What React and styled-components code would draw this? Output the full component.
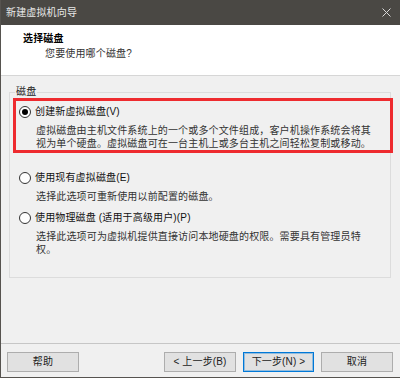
import React from "react";
import styled, { createGlobalStyle } from "styled-components";

const Global = createGlobalStyle`
  html, body { margin: 0; padding: 0; background: #f0f0f0; }
  * { box-sizing: border-box; }
  body {
    font-family: "Liberation Sans", "Noto Sans CJK SC", sans-serif;
    font-size: 10px;
    letter-spacing: 0.15px;
  }
`;

const Window = styled.div`
  width: 400px;
  height: 378px;
  display: flex;
  flex-direction: column;
  background: #f0f0f0;
  border-left: 1px solid #56534f;
  border-bottom: 1px solid #56534f;
  overflow: hidden;
`;

const TitleBar = styled.div`
  height: 25px;
  flex: none;
  background: #4a4844;
  color: #e8e8e8;
  display: flex;
  align-items: center;
  justify-content: space-between;
  padding: 0 9px 0 5px;
  line-height: 13px;
`;

const Header = styled.div`
  height: 51px;
  flex: none;
  background: #ffffff;
  border-bottom: 1px solid #d6d6d6;
  padding: 7px 0 0 22px;
`;

const HeaderTitle = styled.div`
  font-weight: 700;
  line-height: 13px;
  color: #000;
`;

const HeaderSub = styled.div`
  margin: 2px 0 0 22px;
  line-height: 13px;
  color: #333;
`;

const Content = styled.div`
  flex: 1;
  padding: 16px 9px 0 8px;
`;

const Group = styled.div`
  position: relative;
  height: 186px;
  border: 1px solid #dcdcdc;
  padding: 12px 0 0 9px;
`;

const Legend = styled.span`
  position: absolute;
  top: -8px;
  left: 5px;
  padding: 0 1px;
  background: #f0f0f0;
  line-height: 13px;
  color: #222;
`;

const Highlight = styled.div`
  position: absolute;
  left: 3px;
  top: 5px;
  width: 380px;
  height: 55px;
  border: 3px solid #ee2b2f;
  pointer-events: none;
`;

const Option = styled.div`
  margin-bottom: ${(p) => p.$after}px;
`;

const RadioRow = styled.label`
  display: flex;
  align-items: center;
  height: 14px;
  line-height: 14px;
  gap: 4px;
  color: #111;
`;

const Radio = styled.span`
  width: 12px;
  height: 12px;
  border-radius: 50%;
  border: 1px solid #333;
  background: #fff;
  display: flex;
  align-items: center;
  justify-content: center;
  flex: none;
  &::after {
    content: "";
    width: 6px;
    height: 6px;
    border-radius: 50%;
    background: ${(p) => (p.$checked ? "#000" : "transparent")};
  }
`;

const Desc = styled.div`
  margin: 5px 0 0 17px;
  width: 340px;
  line-height: 13px;
  color: #333;
`;

const Footer = styled.div`
  height: 34px;
  flex: none;
  border-top: 1px solid #c6c6c6;
  display: flex;
  align-items: flex-start;
  gap: 7px;
  padding: 8px 7px 0 6px;
`;

const Button = styled.div`
  width: ${(p) => p.$w || 72}px;
  height: 20px;
  background: #e1e1e1;
  border: 1px solid ${(p) => (p.$primary ? "#0078d7" : "#adadad")};
  box-shadow: ${(p) => (p.$primary ? "inset 0 0 0 1px rgba(0,120,215,0.35)" : "none")};
  display: flex;
  align-items: center;
  justify-content: center;
  color: #222;
  line-height: 18px;
  margin-left: ${(p) => (p.$push ? "auto" : "0")};
`;

const CloseIcon = () => (
  <svg width="9" height="9" viewBox="0 0 9 9">
    <path d="M0.5 0.5 L8.5 8.5 M8.5 0.5 L0.5 8.5" stroke="#d8d8d8" strokeWidth="1" fill="none" />
  </svg>
);

export default function App() {
  return (
    <>
      <Global />
      <Window>
        <TitleBar>
          <span>新建虚拟机向导</span>
          <CloseIcon />
        </TitleBar>
        <Header>
          <HeaderTitle>选择磁盘</HeaderTitle>
          <HeaderSub>您要使用哪个磁盘?</HeaderSub>
        </Header>
        <Content>
          <Group>
            <Legend>磁盘</Legend>
            <Option $after={21}>
              <RadioRow>
                <Radio $checked />
                创建新虚拟磁盘(V)
              </RadioRow>
              <Desc>
                虚拟磁盘由主机文件系统上的一个或多个文件组成，客户机操作系统会将其视为单个硬盘。虚拟磁盘可在一台主机上或多台主机之间轻松复制或移动。
              </Desc>
            </Option>
            <Option $after={8}>
              <RadioRow>
                <Radio />
                使用现有虚拟磁盘(E)
              </RadioRow>
              <Desc>选择此选项可重新使用以前配置的磁盘。</Desc>
            </Option>
            <Option $after={0}>
              <RadioRow>
                <Radio />
                使用物理磁盘 (适用于高级用户)(P)
              </RadioRow>
              <Desc>
                选择此选项可为虚拟机提供直接访问本地硬盘的权限。需要具有管理员特权。
              </Desc>
            </Option>
            <Highlight />
          </Group>
        </Content>
        <Footer>
          <Button>帮助</Button>
          <Button $push>&lt; 上一步(B)</Button>
          <Button $primary $w={71}>下一步(N) &gt;</Button>
          <Button>取消</Button>
        </Footer>
      </Window>
    </>
  );
}
